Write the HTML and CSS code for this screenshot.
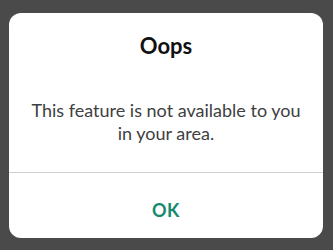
FILE: index.html
```html
<!DOCTYPE html>
<html>
<head>
<meta charset="utf-8">
<link rel="stylesheet" href="styles.css">
</head>
<body>
<div class="dialog">
  <div class="content">
    <h1 class="title">Oops</h1>
    <p class="message">This feature is not available to you in your area.</p>
  </div>
  <div class="actions">
    <button class="ok">OK</button>
  </div>
</div>
</body>
</html>
```
FILE: styles.css
```css
html, body {
  margin: 0;
  padding: 0;
  background: #4a4a4a;
  width: 333px;
  height: 250px;
  overflow: hidden;
}
body {
  padding: 13px 10px 0 9px;
  box-sizing: border-box;
  font-family: Lato, "Noto Sans", sans-serif;
}
.dialog {
  background: #fff;
  border-radius: 12px;
  height: 225px;
  display: flex;
  flex-direction: column;
}
.content {
  height: 160px;
  border-bottom: 1px solid #cfcfcf;
  display: flex;
  flex-direction: column;
  align-items: center;
  padding-top: 20px;
  box-sizing: border-box;
}
.title {
  margin: 0;
  font-size: 22px;
  font-weight: 700;
  color: #111;
  line-height: 26px;
}
.message {
  margin: 40px 0 0;
  font-size: 18px;
  line-height: 23px;
  color: #404040;
  text-align: center;
  padding: 0 18px;
}
.actions {
  flex: 1;
  display: flex;
  align-items: center;
  justify-content: center;
  padding-top: 8px;
}
.ok {
  background: none;
  border: none;
  font-family: inherit;
  font-size: 18px;
  font-weight: 700;
  color: #17896e;
  padding: 0;
  letter-spacing: 0.5px;
}
```
